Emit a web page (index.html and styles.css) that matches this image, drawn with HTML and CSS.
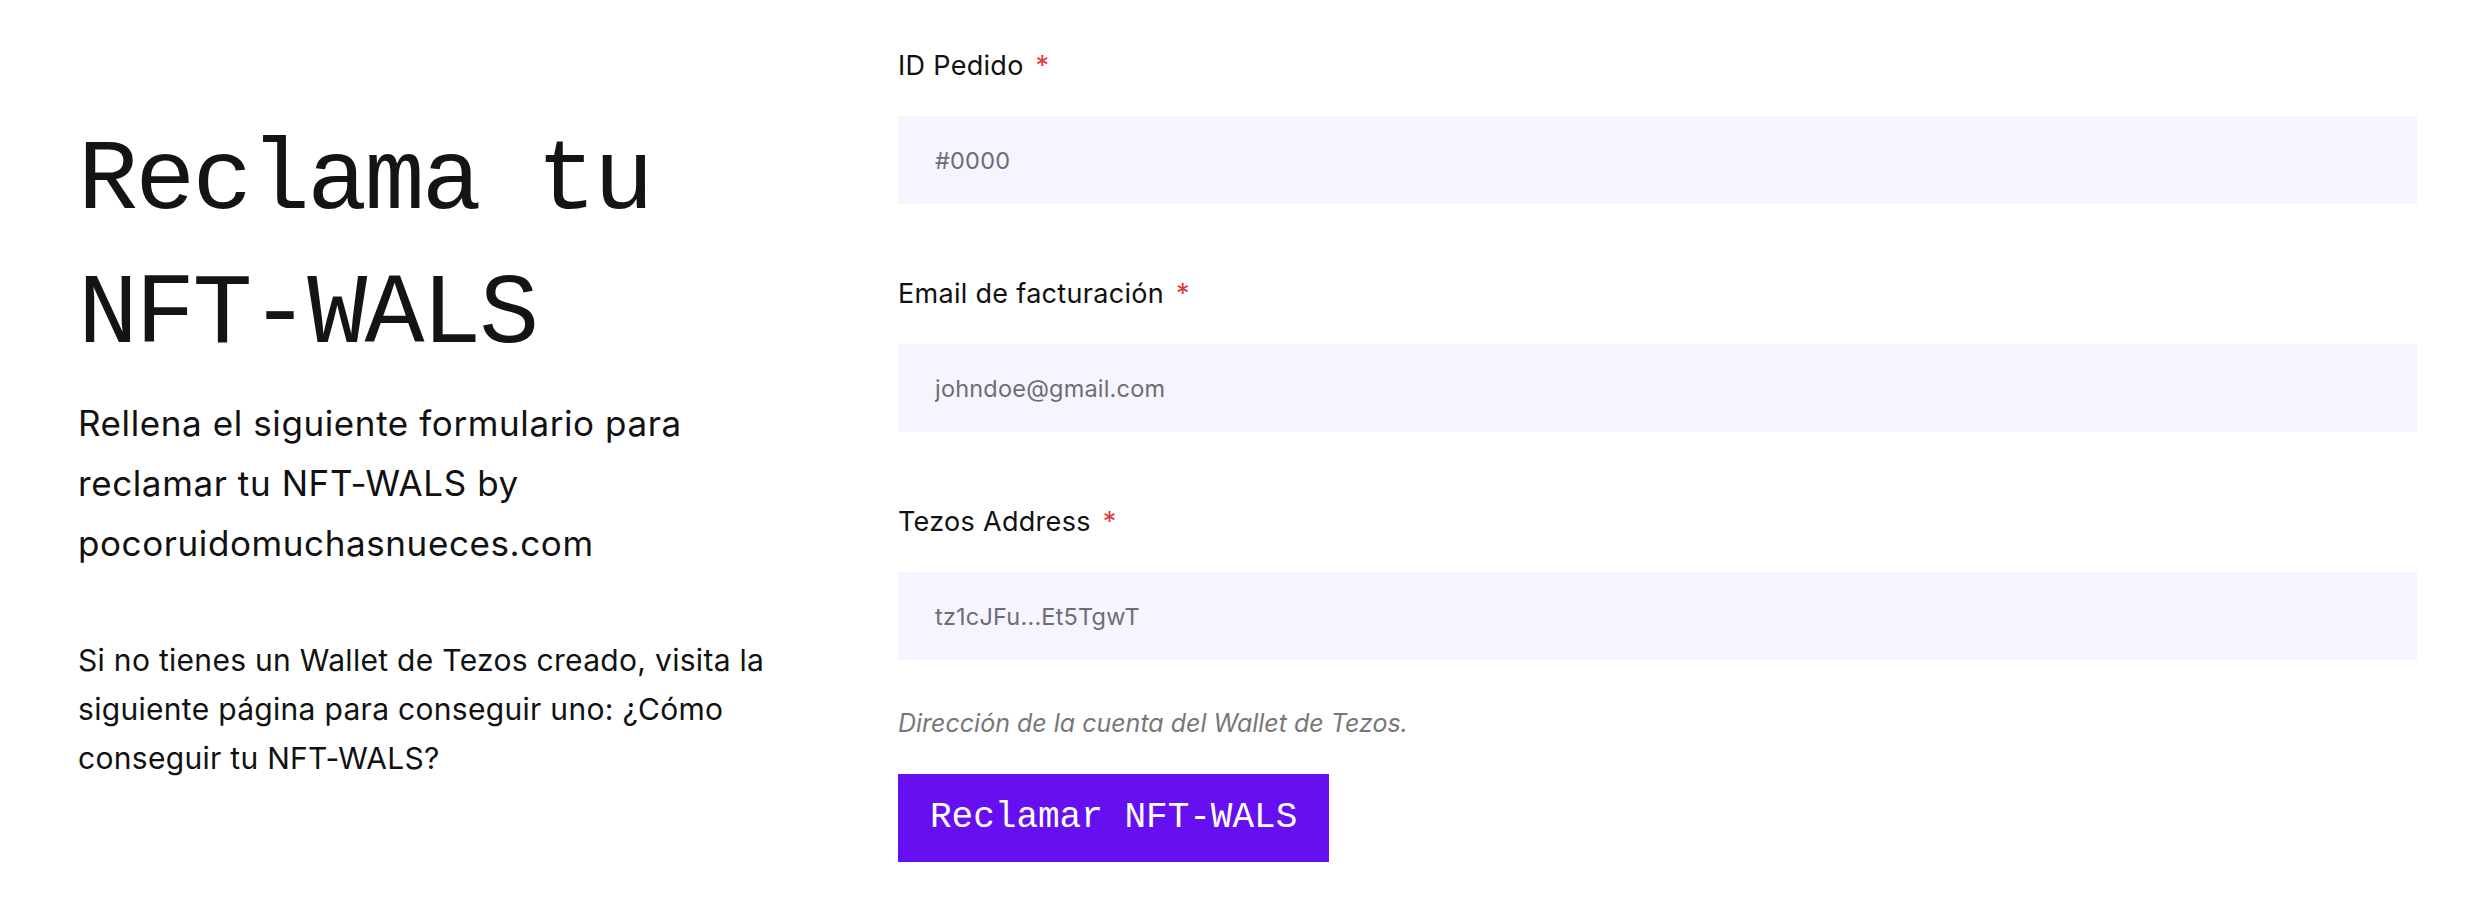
FILE: index.html
```html
<!DOCTYPE html>
<html lang="es">
<head>
<meta charset="utf-8">
<title>Reclama tu NFT-WALS</title>
<link rel="stylesheet" href="styles.css">
</head>
<body>
<main class="page">
  <section class="intro">
    <h1 class="intro-title">Reclama tu NFT-WALS</h1>
    <p class="intro-lead">Rellena el siguiente formulario para reclamar tu NFT-WALS by pocoruidomuchasnueces.com</p>
    <p class="intro-note">Si no tienes un Wallet de Tezos creado, visita la siguiente página para conseguir uno: ¿Cómo conseguir tu NFT-WALS?</p>
  </section>
  <form class="claim-form">
    <div class="field">
      <label class="field-label" for="order">ID Pedido <span class="required">*</span></label>
      <input class="field-input" id="order" type="text" placeholder="#0000">
    </div>
    <div class="field">
      <label class="field-label" for="email">Email de facturación <span class="required">*</span></label>
      <input class="field-input" id="email" type="email" placeholder="johndoe@gmail.com">
    </div>
    <div class="field field-last">
      <label class="field-label" for="tezos">Tezos Address <span class="required">*</span></label>
      <input class="field-input" id="tezos" type="text" placeholder="tz1cJFu...Et5TgwT">
    </div>
    <p class="field-help">Dirección de la cuenta del Wallet de Tezos.</p>
    <button class="submit" type="button">Reclamar NFT-WALS</button>
  </form>
</main>
</body>
</html>
```

FILE: styles.css
```css
* { box-sizing: border-box; }

html, body {
  margin: 0;
  padding: 0;
  background: #ffffff;
}

body {
  font-family: "Inter", "Roboto", "Liberation Sans", sans-serif;
  color: #111111;
}

.page {
  display: flex;
  align-items: flex-start;
  width: 2484px;
  height: 906px;
}

.intro {
  flex: 0 0 898px;
  padding: 115px 0 0 78px;
}

.intro-title {
  width: 717px;
  margin: 0;
  font-family: "Liberation Mono", "DejaVu Sans Mono", monospace;
  font-weight: 400;
  font-size: 100px;
  letter-spacing: -2.7px;
  line-height: 134px;
  color: #141414;
}

.intro-lead {
  width: 717px;
  margin: 10px 0 0;
  font-size: 35px;
  letter-spacing: 0.6px;
  line-height: 60px;
}

.intro-note {
  width: 717px;
  margin: 63px 0 0;
  font-size: 30px;
  letter-spacing: 0.3px;
  line-height: 49px;
}

.claim-form {
  flex: 1 1 auto;
  display: flex;
  flex-direction: column;
  align-items: flex-start;
  padding: 51px 67px 0 0;
}

.field {
  display: flex;
  flex-direction: column;
  width: 100%;
  margin-bottom: 75px;
}

.field-last {
  margin-bottom: 48px;
}

.field-label {
  font-size: 27px;
  letter-spacing: 0.3px;
  line-height: 30px;
  margin-bottom: 35px;
  color: #111111;
}

.required {
  color: #e5343a;
  margin-left: 4px;
}

.field-input {
  width: 100%;
  height: 88px;
  border: 0;
  outline: 0;
  padding: 0 37px;
  background: #f6f4fe;
  font-family: inherit;
  font-size: 23.5px;
  letter-spacing: 0.2px;
  color: #333333;
}

.field-input::placeholder {
  color: #6e6d72;
  opacity: 1;
}

.field-help {
  margin: 0 0 36px;
  font-size: 25px;
  line-height: 30px;
  font-style: italic;
  color: #777777;
}

.submit {
  height: 88px;
  padding: 0 32px;
  border: 0;
  background: #6610f2;
  color: #ffffff;
  font-family: "Liberation Mono", "DejaVu Sans Mono", monospace;
  font-size: 36px;
  line-height: 88px;
  cursor: pointer;
}
```
